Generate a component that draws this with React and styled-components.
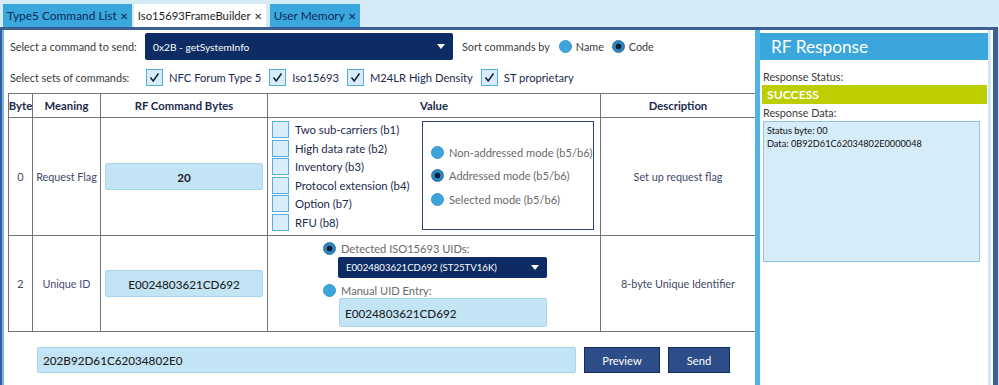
import React from 'react';
import styled, { createGlobalStyle } from 'styled-components';

const GlobalStyle = createGlobalStyle`
  html, body { margin: 0; padding: 0; background: #fff; }
  body { font-family: Lato, "Open Sans", sans-serif; color: #333; white-space: nowrap; }
  #root { width: 999px; height: 385px; overflow: hidden; }
`;

const Page = styled.div`
  width: 999px;
  height: 385px;
  display: flex;
  flex-direction: column;
  background: #d5ebf8;
`;

const TabBar = styled.div`
  height: 27px;
  display: flex;
  align-items: flex-end;
  gap: 2px;
  padding-left: 3px;
  box-sizing: border-box;
`;

const Tab = styled.div`
  height: 23px;
  display: flex;
  align-items: center;
  gap: 3px;
  padding: 0 4px 0 4px;
  margin-right: ${p => (p.active ? '2px' : '0')};
  font-size: ${p => (p.active ? 11.3 : 11.9)}px;
  color: ${p => (p.active ? '#1e1e1e' : '#0e2a5a')};
  background: ${p => (p.active ? '#fff' : '#3aa7dd')};
  span { font-size: 10px; color: ${p => (p.active ? '#333' : '#0e2a5a')}; }
`;

const Frame = styled.div`
  flex: 1;
  display: flex;
  width: 998px;
  box-sizing: border-box;
  border-top: 3px solid #3c5e93;
  border-left: 2px solid #3c5e93;
  border-right: 5px solid #3c5e93;
  background: #fff;
`;

const Main = styled.div`
  width: 753px;
  border-left: 2px solid #6cbde9;
  padding: 3px 0 0 4px;
  box-sizing: border-box;
  display: flex;
  flex-direction: column;
`;

const ControlRow = styled.div`
  display: flex;
  align-items: center;
  height: ${p => p.h}px;
  margin-top: ${p => p.mt || 0}px;
`;

const Label = styled.div`
  width: ${p => p.w}px;
  padding-left: 2px;
  font-size: 10.8px;
  color: #3a3a3a;
`;

const Dropdown = styled.div`
  width: ${p => p.w}px;
  height: ${p => p.h}px;
  box-sizing: border-box;
  background: #0c2c63;
  border-radius: 2px;
  color: #fff;
  font-size: ${p => p.fs}px;
  display: flex;
  align-items: center;
  justify-content: space-between;
  padding: 0 8px 0 8px;
  &::after {
    content: '';
    border-left: 4px solid transparent;
    border-right: 4px solid transparent;
    border-top: 5px solid #fff;
  }
`;

const SortText = styled.span`
  font-size: 10.8px;
  color: #3a3a3a;
  margin: 0 ${p => p.mr ?? 8}px 0 ${p => p.ml ?? 4}px;
`;

const Radio = styled.span`
  width: 13px;
  height: 13px;
  border-radius: 50%;
  box-sizing: border-box;
  flex-shrink: 0;
  background: ${p => (p.on ? 'radial-gradient(circle, #101c33 0 2.6px, #2b87c2 3.2px 100%)' : '#3ea4dc')};
  border: 1px solid ${p => (p.on ? '#2a6fa0' : '#3597d0')};
`;

const CheckItem = styled.div`
  display: flex;
  align-items: center;
  gap: 6px;
  margin-right: 8px;
  font-size: 11.2px;
  color: #1c2a4e;
`;

const Box = styled.span`
  width: 17px;
  height: 17px;
  box-sizing: border-box;
  flex-shrink: 0;
  background: #d8edf9;
  border: 1px solid #55aede;
  display: flex;
  align-items: center;
  justify-content: center;
`;

const Table = styled.div`
  margin-top: 5px;
  display: grid;
  grid-template-columns: 23px 67px 166px 332px 154px;
  grid-template-rows: 23px 117px 95px;
  gap: 1px;
  padding: 1px;
  background: #747474;
  width: 748px;
  box-sizing: border-box;
`;

const HeadCell = styled.div`
  background: #fff;
  display: flex;
  align-items: center;
  justify-content: center;
  font-size: 11.3px;
  font-weight: 700;
  color: #1b2a4b;
`;

const Cell = styled.div`
  background: #fff;
  display: flex;
  align-items: center;
  justify-content: center;
  font-size: 10.8px;
  color: ${p => p.color || '#3e4868'};
`;

const ValueCell = styled.div`
  background: #fff;
  display: flex;
  align-items: flex-start;
  padding: 3px 0 0 4px;
`;

const UidCell = styled.div`
  background: #fff;
  display: flex;
  flex-direction: column;
  align-items: flex-start;
  padding: 5px 0 0 55px;
`;

const Field = styled.div`
  width: ${p => p.w}px;
  height: ${p => p.h}px;
  box-sizing: border-box;
  background: #c3e4f5;
  border: 1px solid #a9d5ee;
  border-radius: 2px;
  display: flex;
  align-items: center;
  justify-content: ${p => (p.center ? 'center' : 'flex-start')};
  padding-left: ${p => (p.center ? 0 : 5)}px;
  font-size: 11.7px;
  font-weight: ${p => (p.bold ? 700 : 500)};
  color: #1e1e1e;
`;

const Indent = styled.div`
  margin: ${p => p.mt}px 0 0 ${p => p.ml}px;
`;

const FlagList = styled.div`
  width: 150px;
  display: flex;
  flex-direction: column;
  gap: 1.5px;
`;

const FlagRow = styled.div`
  display: flex;
  align-items: center;
  gap: 6px;
  font-size: 11.3px;
  color: #1c2a4e;
`;

const ModeBox = styled.div`
  width: 172px;
  height: 109px;
  box-sizing: border-box;
  border: 1px solid #2c4372;
  display: flex;
  flex-direction: column;
  justify-content: center;
  padding: 0 0 0 8px;
`;

const OptionRow = styled.div`
  display: flex;
  align-items: center;
  gap: 5px;
  height: ${p => p.h || 23.5}px;
  margin-top: ${p => p.mt || 0}px;
  font-size: 11.1px;
  color: #6a6a6a;
`;

const BottomRow = styled.div`
  display: flex;
  align-items: center;
  gap: 8px;
  padding: 15px 0 0 29px;
`;

const Button = styled.div`
  width: ${p => p.w}px;
  height: 26px;
  box-sizing: border-box;
  background: #2c4d88;
  border: 1px solid #142b55;
  color: #fff;
  font-size: 11.2px;
  display: flex;
  align-items: center;
  justify-content: center;
`;

const Side = styled.div`
  width: 236px;
  box-sizing: border-box;
  border-left: 5px solid #50b3e6;
  border-right: 3px solid #cfe8f7;
  padding-top: 3px;
  display: flex;
  flex-direction: column;
`;

const SideHeader = styled.div`
  height: 27px;
  background: #3aa6dc;
  color: #fff;
  font-size: 17.3px;
  padding-left: 11px;
  display: flex;
  align-items: center;
`;

const SideLabel = styled.div`
  font-size: 10.8px;
  color: #3a3a3a;
  padding-left: 3px;
  margin-top: ${p => p.mt}px;
`;

const Status = styled.div`
  height: 19px;
  margin: 2px 1px 0 2px;
  background: #bccd00;
  color: #fff;
  font-size: 12.2px;
  font-weight: 700;
  display: flex;
  align-items: center;
  padding-left: 5px;
`;

const DataBox = styled.div`
  width: 217px;
  height: 141px;
  margin: 2px 0 0 3px;
  box-sizing: border-box;
  background: #d6ecf8;
  border: 1px solid #8ec5e3;
  padding: 2px 3px;
  font-size: 9.2px;
  line-height: 13px;
  color: #111;
`;

const Check = () => (
  <svg width="13" height="13" viewBox="0 0 13 13">
    <polyline points="2.5,6.5 5.2,10 10.5,2.5" fill="none" stroke="#10203f" strokeWidth="1.5" />
  </svg>
);

const flags = [
  'Two sub-carriers (b1)',
  'High data rate (b2)',
  'Inventory (b3)',
  'Protocol extension (b4)',
  'Option (b7)',
  'RFU (b8)',
];

const modes = [
  { label: 'Non-addressed mode (b5/b6)', on: false },
  { label: 'Addressed mode (b5/b6)', on: true },
  { label: 'Selected mode (b5/b6)', on: false },
];

const sets = ['NFC Forum Type 5', 'Iso15693', 'M24LR High Density', 'ST proprietary'];

export default function App() {
  return (
    <Page>
      <GlobalStyle />
      <TabBar>
        <Tab>Type5 Command List <span>✕</span></Tab>
        <Tab active>Iso15693FrameBuilder <span>✕</span></Tab>
        <Tab>User Memory <span>✕</span></Tab>
      </TabBar>
      <Frame>
        <Main>
          <ControlRow h={27}>
            <Label w={135}>Select a command to send:</Label>
            <Dropdown w={308} h={27} fs={10.2}>0x2B - getSystemInfo</Dropdown>
            <SortText ml={9} mr={9}>Sort commands by</SortText>
            <Radio />
            <SortText>Name</SortText>
            <Radio on />
            <SortText>Code</SortText>
          </ControlRow>
          <ControlRow h={22} mt={6}>
            <Label w={136}>Select sets of commands:</Label>
            {sets.map(s => (
              <CheckItem key={s}>
                <Box><Check /></Box>
                {s}
              </CheckItem>
            ))}
          </ControlRow>
          <Table>
            <HeadCell>Byte</HeadCell>
            <HeadCell>Meaning</HeadCell>
            <HeadCell>RF Command Bytes</HeadCell>
            <HeadCell>Value</HeadCell>
            <HeadCell>Description</HeadCell>

            <Cell>0</Cell>
            <Cell>Request Flag</Cell>
            <Cell><Field w={158} h={27} center bold>20</Field></Cell>
            <ValueCell>
              <FlagList>
                {flags.map(f => (
                  <FlagRow key={f}><Box />{f}</FlagRow>
                ))}
              </FlagList>
              <ModeBox>
                {modes.map(m => (
                  <OptionRow key={m.label}><Radio on={m.on} />{m.label}</OptionRow>
                ))}
              </ModeBox>
            </ValueCell>
            <Cell>Set up request flag</Cell>

            <Cell>2</Cell>
            <Cell color="#4c4a78">Unique ID</Cell>
            <Cell><Field w={158} h={27} center>E0024803621CD692</Field></Cell>
            <UidCell>
              <OptionRow h={14}><Radio on />Detected ISO15693 UIDs:</OptionRow>
              <Indent mt={2} ml={15}>
                <Dropdown w={209} h={21} fs={9.6}>E0024803621CD692 (ST25TV16K)</Dropdown>
              </Indent>
              <OptionRow h={14} mt={5}><Radio />Manual UID Entry:</OptionRow>
              <Indent mt={1} ml={16}>
                <Field w={208} h={29}>E0024803621CD692</Field>
              </Indent>
            </UidCell>
            <Cell>8-byte Unique Identifier</Cell>
          </Table>
          <BottomRow>
            <Field w={539} h={26}>202B92D61C62034802E0</Field>
            <Button w={76}>Preview</Button>
            <Button w={62}>Send</Button>
          </BottomRow>
        </Main>
        <Side>
          <SideHeader>RF Response</SideHeader>
          <SideLabel mt={10}>Response Status:</SideLabel>
          <Status>SUCCESS</Status>
          <SideLabel mt={2}>Response Data:</SideLabel>
          <DataBox>
            <div>Status byte: 00</div>
            <div>Data: 0B92D61C62034802E0000048</div>
          </DataBox>
        </Side>
      </Frame>
    </Page>
  );
}
